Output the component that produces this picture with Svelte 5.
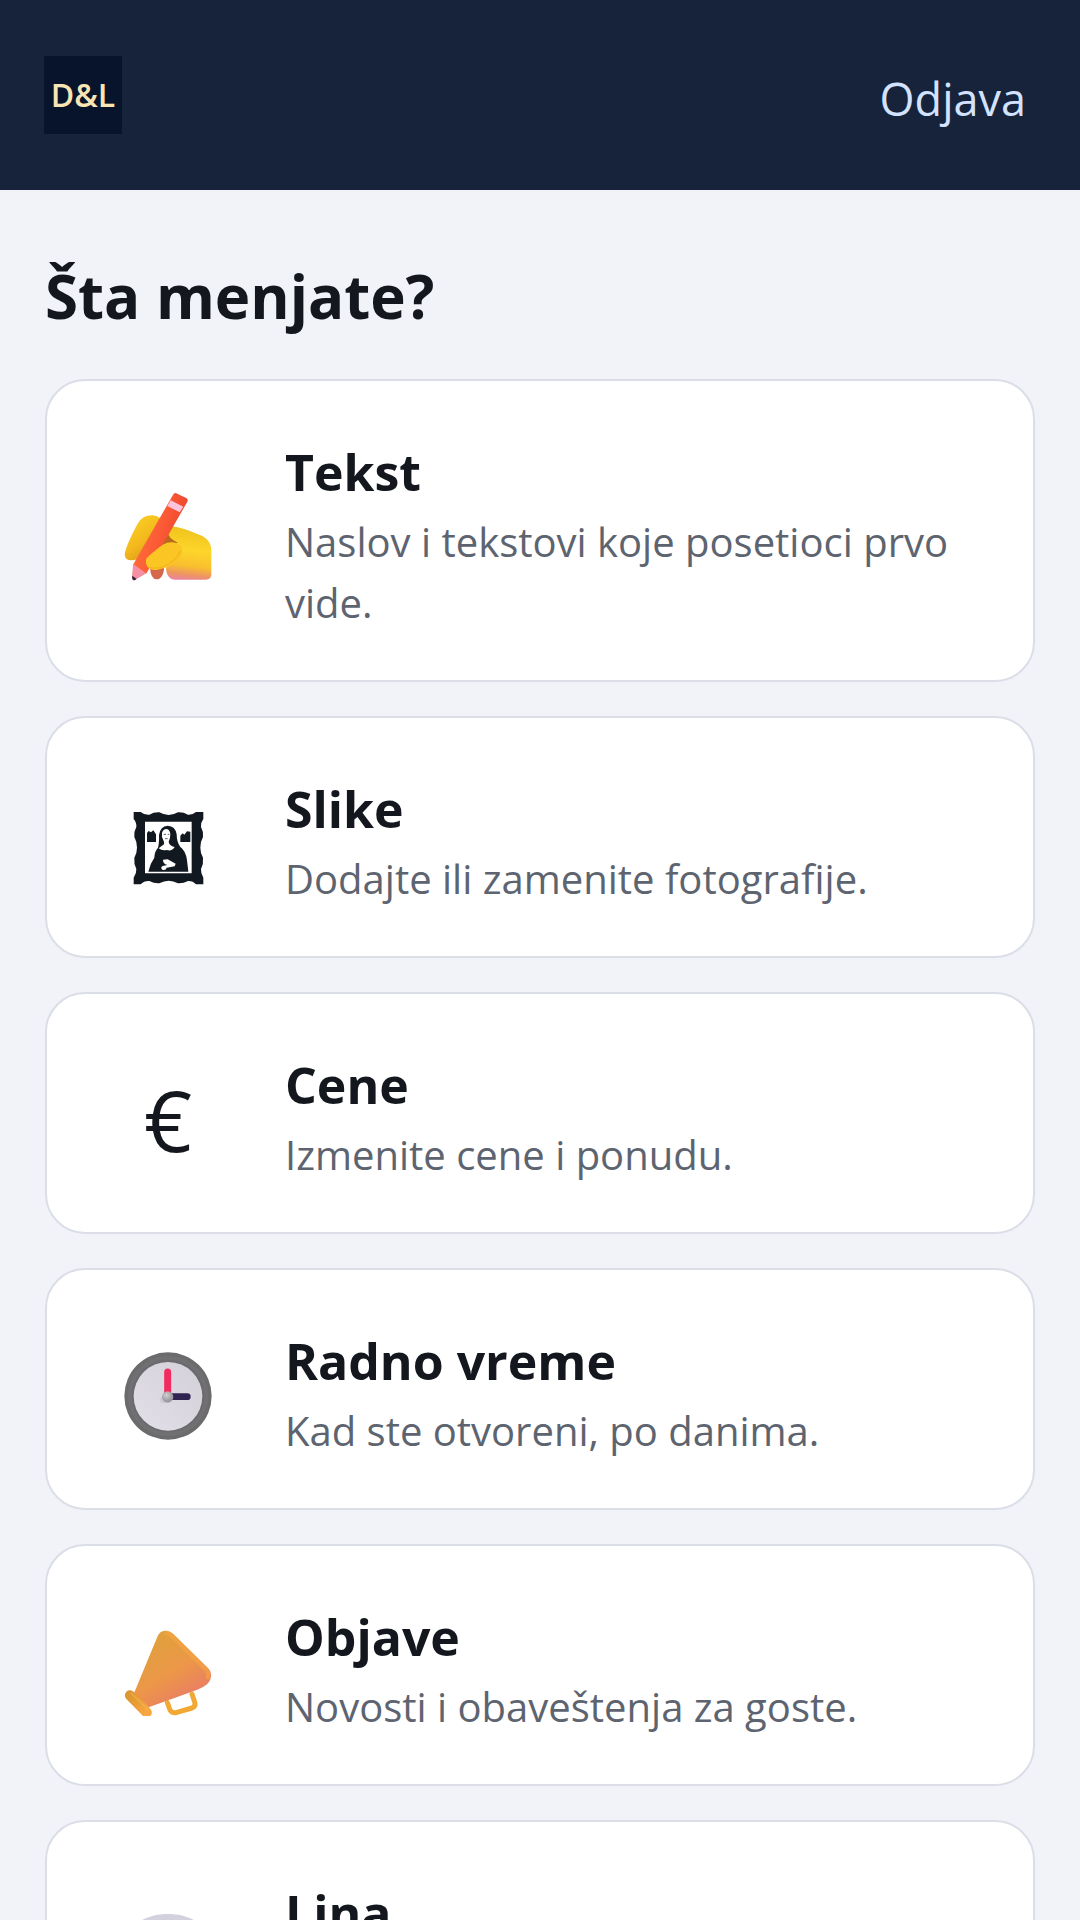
<script>
    const sections = [
        {
            icon: "text",
            title: "Tekst",
            desc: "Naslov i tekstovi koje posetioci prvo vide.",
        },
        {
            icon: "images",
            title: "Slike",
            desc: "Dodajte ili zamenite fotografije.",
        },
        { icon: "prices", title: "Cene", desc: "Izmenite cene i ponudu." },
        {
            icon: "hours",
            title: "Radno vreme",
            desc: "Kad ste otvoreni, po danima.",
        },
        {
            icon: "posts",
            title: "Objave",
            desc: "Novosti i obaveštenja za goste.",
        },
        { icon: "chat", title: "Lina", desc: "" },
    ];
</script>

<div class="page">
    <header>
        <a class="logo" href="#top">D&amp;L</a>
        <button type="button" class="logout">Odjava</button>
    </header>

    <main>
        <h1>Šta menjate?</h1>

        <nav>
            {#each sections as section (section.icon)}
                <a class="card" href="#{section.icon}">
                    <span class="icon" aria-hidden="true">
                        {#if section.icon === "text"}
                            <svg viewBox="44 38 264 264">
                                <defs>
                                    <linearGradient id="hand" x1="0.1" y1="0" x2="0" y2="1">
                                        <stop offset="0" stop-color="#efc31c" />
                                        <stop offset="0.4" stop-color="#fdd62a" />
                                        <stop offset="0.7" stop-color="#f9bf2e" />
                                        <stop offset="0.86" stop-color="#ee9463" />
                                        <stop offset="1" stop-color="#ea7fb0" />
                                    </linearGradient>
                                    <linearGradient id="finger" x1="0.2" y1="0" x2="0.8" y2="1">
                                        <stop offset="0" stop-color="#fbd224" />
                                        <stop offset="0.55" stop-color="#f3b81d" />
                                        <stop offset="1" stop-color="#d98f1d" />
                                    </linearGradient>
                                    <linearGradient id="pencil" x1="0" y1="0" x2="1" y2="0.4">
                                        <stop offset="0" stop-color="#ff7a3d" />
                                        <stop offset="0.6" stop-color="#fb5a35" />
                                        <stop offset="1" stop-color="#e8432f" />
                                    </linearGradient>
                                </defs>
                                <path d="M122 262 L165 256 Q163 296 142 297 Q124 296 122 262Z" fill="#d5674c" />
                                <path d="M150 160 L180 136 L210 186 L150 220Z" fill="#b8691c" />
                                <path d="M184 137 Q226 144 262 160 Q304 172 306 208 L306 284 Q304 298 290 298 L196 298 Q174 296 170 268 L172 196 L206 188 Q176 172 176 158Z" fill="url(#hand)" />
                                <path d="M46 222 Q50 196 84 132 Q98 104 130 105 Q160 108 154 132 Q132 162 98 222 Q88 240 66 240 Q46 240 46 222Z" fill="url(#finger)" />
                                <path d="M193 40 Q198 36 204 40 L232 54 Q237 58 234 64 L112 278 L74 299 Q68 298 69 291 L72 252Z" fill="url(#pencil)" />
                                <path d="M184 60 L222 79 L211 96 L174 77Z" fill="#fbc5dc" />
                                <path d="M71 250 L110 279 L76 299 Q68 299 69 291Z" fill="#f590a4" />
                                <path d="M69 286 L82 296 L76 300 Q67 300 69 286Z" fill="#35233f" />
                                <path d="M112 234 Q118 224 160 193 Q182 181 204 189 Q230 202 212 234 Q184 262 142 269 Q116 270 110 250 Q109 240 112 234Z" fill="#fbc624" />
                                <path d="M116 260 Q142 270 176 252 Q204 238 212 212" fill="none" stroke="#e5a11c" stroke-width="4" opacity="0.4" />
                            </svg>
                        {:else if section.icon === "images"}
                            <svg viewBox="44 31 264 264">
                                <path d="M73 67 H94 Q104 76 120 75 Q134 67 150 68 Q164 76 178 76 Q192 76 206 68 Q222 67 236 75 Q250 76 260 67 H282 V88 Q274 98 275 112 Q283 126 281 142 Q273 156 273 174 Q273 190 281 204 Q283 222 275 238 Q274 252 282 264 V284 H260 Q250 273 236 274 Q222 282 206 281 Q192 273 178 273 Q164 273 150 281 Q134 282 120 274 Q104 273 94 284 H73 V264 Q82 252 81 238 Q73 222 75 204 Q83 190 83 174 Q83 156 75 142 Q73 126 81 112 Q82 98 73 88Z" fill="#12181f" />
                                <path d="M107 96 H247 V251 H107Z" fill="#fff" />
                                <path d="M113 130 L118 124 L125 128 L132 122 L140 134 V157 H113Z M213 157 V138 L220 131 L225 135 L233 125 L243 126 V157Z" fill="#12181f" />
                                <path d="M117 246 Q122 222 135 204 Q136 184 146 174 Q150 160 149 136 Q153 109 175 108 Q198 109 202 134 Q202 158 213 172 Q230 184 233 212 L237 246Z" fill="#12181f" />
                                <path d="M158 130 Q161 118 172 118 Q182 120 183 134 Q183 148 178 156 Q179 168 196 172 Q188 186 172 181 Q158 184 148 176 L164 164 Q166 158 162 152 Q156 144 158 130Z" fill="#fff" />
                                <path d="M163 134 h7 M175 134 h5 M167 147 h8" stroke="#12181f" stroke-width="2" />
                                <path d="M161 210 L175 209 L199 222 L196 230 L172 234 Q170 243 159 240 Q152 234 160 229 L174 226 Q160 222 161 210Z" fill="#fff" />
                            </svg>
                        {:else if section.icon === "prices"}
                            €
                        {:else if section.icon === "hours"}
                            <svg viewBox="44 38 264 264">
                                <defs>
                                    <linearGradient id="face" x1="1" y1="0" x2="0" y2="1">
                                        <stop offset="0" stop-color="#d3d0d8" />
                                        <stop offset="1" stop-color="#e2dfe8" />
                                    </linearGradient>
                                    <radialGradient id="knob" cx="0.4" cy="0.35">
                                        <stop offset="0" stop-color="#d2cfce" />
                                        <stop offset="1" stop-color="#9d9a9f" />
                                    </radialGradient>
                                </defs>
                                <circle cx="176" cy="170" r="131" fill="#6b6a6d" />
                                <circle cx="176" cy="170" r="115" fill="none" stroke="#706f72" stroke-width="12" />
                                <circle cx="176" cy="171" r="103" fill="url(#face)" />
                                <path d="M170 170 L162 182" stroke="#c6c1d1" stroke-width="20" stroke-linecap="round" opacity="0.6" />
                                <path d="M175 170 V98" stroke="#f12b60" stroke-width="21" stroke-linecap="round" />
                                <path d="M176 172 H234" stroke="#302452" stroke-width="20" stroke-linecap="round" />
                                <circle cx="175" cy="173" r="17" fill="url(#knob)" />
                            </svg>
                        {:else if section.icon === "posts"}
                            <svg viewBox="44 38 264 264">
                                <defs>
                                    <linearGradient id="cone" x1="0.2" y1="0.1" x2="0.75" y2="1">
                                        <stop offset="0" stop-color="#dfa03c" />
                                        <stop offset="0.5" stop-color="#ec9748" />
                                        <stop offset="1" stop-color="#e9776a" />
                                    </linearGradient>
                                    <linearGradient id="rim" x1="0" y1="0" x2="1" y2="1">
                                        <stop offset="0" stop-color="#dc9730" />
                                        <stop offset="1" stop-color="#f9a640" />
                                    </linearGradient>
                                </defs>
                                <path d="M174 262 L182 284 Q188 294 200 292 L248 278 Q260 273 256 260 L248 236" fill="none" stroke="#f2a934" stroke-width="15" stroke-linecap="round" stroke-linejoin="round" />
                                <path d="M145 62 Q152 46 170 46 Q182 46 192 56 L296 158 Q307 170 305 184 Q302 202 286 212 Q275 219 262 224 L118 276 L74 234Z" fill="url(#cone)" />
                                <path d="M170 54 Q180 54 190 64 L290 162 Q299 174 296 186" fill="none" stroke="#f5a443" stroke-width="13" stroke-linecap="round" opacity="0.65" />
                                <path d="M62 240 L112 291" stroke="url(#rim)" stroke-width="31" stroke-linecap="round" />
                                <path d="M66 234 L117 284" stroke="#f9b64e" stroke-width="6" stroke-linecap="round" opacity="0.5" />
                            </svg>
                        {:else}
                            <svg viewBox="0 0 88 88">
                                <path d="M44 10 C68 10 85 22 85 42 C85 62 68 73 44 73 C38 73 32 72 27 70 L10 78 L15 63 C7 58 3 51 3 42 C3 22 20 10 44 10Z" fill="#d3d1de" />
                            </svg>
                        {/if}
                    </span>
                    <span class="copy">
                        <span class="title">{section.title}</span>
                        <span class="desc">{section.desc}</span>
                    </span>
                </a>
            {/each}
        </nav>
    </main>
</div>

<style>
    :global(body) {
        overflow: hidden;
        background: #f1f3f8;
    }

    .page {
        height: 100vh;
        overflow: hidden;
        color: #14181e;
        font-family: "Segoe UI", "Open Sans", "Noto Sans", sans-serif;
    }

    header {
        display: flex;
        justify-content: space-between;
        align-items: center;
        padding: 56px 44px;
        background: #17233b;
    }

    .logo {
        display: flex;
        justify-content: center;
        align-items: center;
        width: 78px;
        height: 78px;
        background: #07142b;
        color: #f8e5b4;
        font-size: 32px;
        font-weight: 600;
        line-height: 78px;
        text-decoration: none;
    }

    .logout {
        padding: 8px 10px 0;
        border: 0;
        background: none;
        color: #d3e2ff;
        font: inherit;
        font-size: 45px;
        line-height: 62px;
        cursor: pointer;
    }

    main {
        padding: 63px 45px;
    }

    h1 {
        margin: 0 0 40px;
        font-size: 60px;
        font-weight: 700;
        line-height: 86px;
    }

    nav {
        display: grid;
        gap: 34px;
    }

    .card {
        display: grid;
        grid-template-columns: 134px 1fr;
        gap: 50px;
        align-items: center;
        padding: 52px 54px 47px;
        border: 2px solid #dbdee7;
        border-radius: 40px;
        background: #fff;
        color: inherit;
        text-decoration: none;
    }

    .icon {
        display: flex;
        justify-content: center;
        align-items: center;
        height: 92px;
        padding-top: 8px;
        font-size: 84px;
        line-height: 92px;
    }

    .icon svg {
        width: 88px;
        height: 88px;
    }

    .title,
    .desc {
        display: block;
    }

    .title {
        font-size: 50px;
        font-weight: 700;
        line-height: 78px;
    }

    .desc {
        min-height: 61px;
        color: #5d6470;
        font-size: 40px;
        line-height: 61px;
    }
</style>
